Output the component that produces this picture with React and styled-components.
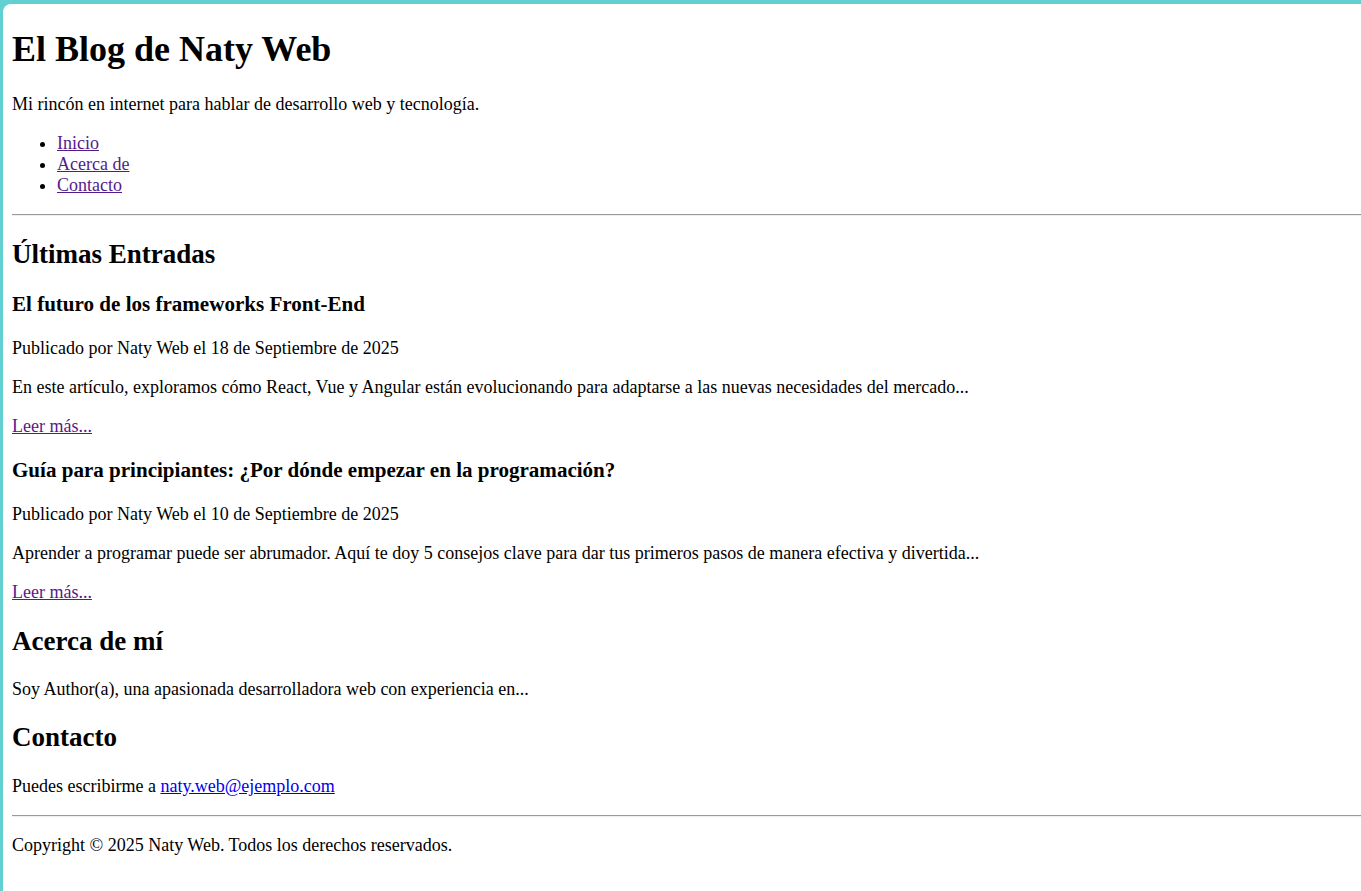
import React from "react";
import styled, { createGlobalStyle } from "styled-components";

const Global = createGlobalStyle`
  html, body { margin: 0; padding: 0; background: #62d0d0; }
  body { font-family: "Liberation Serif", "Times New Roman", serif; font-size: 18px; color: #000; }
`;

const Frame = styled.div`
  background: #62d0d0;
  padding: 4px 0 0 3px;
  min-height: 891px;
  box-sizing: border-box;
  display: flex;
`;

const Page = styled.div`
  flex: 1;
  background: #fff;
  border-top-left-radius: 8px;
  padding: 0 0 0 9px;
  display: flow-root;
`;

const Title = styled.h1`
  font-size: 36px;
  font-weight: bold;
  margin: 24.12px 0;
`;

const Text = styled.p`
  margin: 18px 0;
`;

const NavList = styled.ul`
  margin: 18px 0;
  padding-left: 45px;
  list-style: disc;
`;

const Link = styled.a`
  color: ${(p) => (p.$visited ? "#551a8b" : "#0000ee")};
  text-decoration: underline;
`;

const Rule = styled.hr`
  margin: 9px 0;
  border: none;
  border-top: 1px solid #9a9a9a;
  border-bottom: 1px solid #eeeeee;
  height: 0;
`;

const SectionTitle = styled.h2`
  font-size: 27px;
  font-weight: bold;
  margin: 22.41px 0;
`;

const PostTitle = styled.h3`
  font-size: 21.06px;
  font-weight: bold;
  margin: 21.06px 0;
`;

const posts = [
  {
    title: "El futuro de los frameworks Front-End",
    date: "18 de Septiembre de 2025",
    text: "En este artículo, exploramos cómo React, Vue y Angular están evolucionando para adaptarse a las nuevas necesidades del mercado...",
  },
  {
    title: "Guía para principiantes: ¿Por dónde empezar en la programación?",
    date: "10 de Septiembre de 2025",
    text: "Aprender a programar puede ser abrumador. Aquí te doy 5 consejos clave para dar tus primeros pasos de manera efectiva y divertida...",
  },
];

export default function App() {
  return (
    <>
      <Global />
      <Frame>
        <Page>
          <header>
            <Title>El Blog de Naty Web</Title>
            <Text>Mi rincón en internet para hablar de desarrollo web y tecnología.</Text>
            <nav>
              <NavList>
                <li><Link $visited href="#inicio">Inicio</Link></li>
                <li><Link $visited href="#acerca">Acerca de</Link></li>
                <li><Link $visited href="#contacto">Contacto</Link></li>
              </NavList>
            </nav>
          </header>
          <Rule />
          <main>
            <section>
              <SectionTitle>Últimas Entradas</SectionTitle>
              {posts.map((p) => (
                <article key={p.title}>
                  <PostTitle>{p.title}</PostTitle>
                  <Text>Publicado por Naty Web el {p.date}</Text>
                  <Text>{p.text}</Text>
                  <Link $visited href="#post">Leer más...</Link>
                </article>
              ))}
            </section>
            <section id="acerca">
              <SectionTitle>Acerca de mí</SectionTitle>
              <Text>Soy Author(a), una apasionada desarrolladora web con experiencia en...</Text>
            </section>
            <section id="contacto">
              <SectionTitle>Contacto</SectionTitle>
              <Text>Puedes escribirme a <Link href="mailto:naty.web@ejemplo.com">naty.web@ejemplo.com</Link></Text>
            </section>
          </main>
          <Rule />
          <footer>
            <Text>Copyright © 2025 Naty Web. Todos los derechos reservados.</Text>
          </footer>
        </Page>
      </Frame>
    </>
  );
}
